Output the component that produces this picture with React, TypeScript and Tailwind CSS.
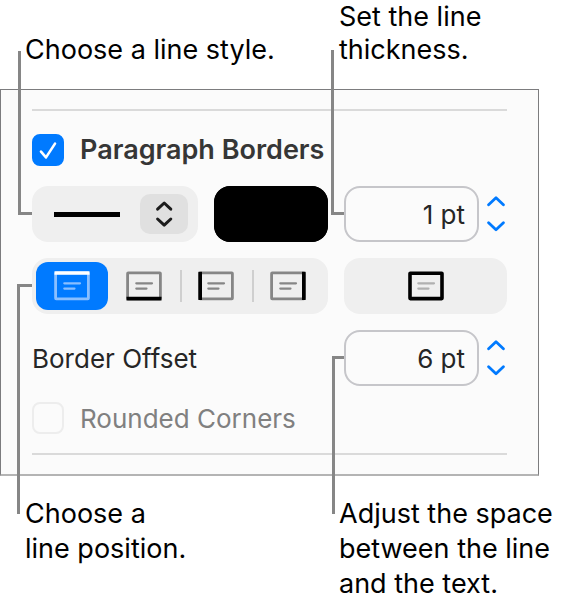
import React, { useState } from 'react';
import clsx from 'clsx';

type Side = 'top' | 'bottom' | 'left' | 'right';

const sideLines: Record<Side, string> = {
  top: 'M0.5 2H35.5',
  bottom: 'M0.5 27.6H35.5',
  left: 'M2.2 0.8V29',
  right: 'M33.8 0.8V29',
};

const sides: { id: Side; label: string }[] = [
  { id: 'top', label: 'Top border' },
  { id: 'bottom', label: 'Bottom border' },
  { id: 'left', label: 'Left border' },
  { id: 'right', label: 'Right border' },
];

const BorderIcon: React.FC<{ side?: Side; active?: boolean }> = ({ side, active }) => {
  const frame = side ? (active ? '#8abfff' : '#868686') : '#000';
  const text = active ? '#8abfff' : side ? '#868686' : '#b0b0b0';
  return (
    <svg viewBox="0 0 36 30" className="h-[30px] w-9" fill="none" aria-hidden="true">
      <rect
        x={side ? 1.6 : 2}
        y={side ? 1.8 : 2.2}
        width={side ? 32.8 : 32}
        height={side ? 26 : 25.4}
        rx={side ? 0.6 : 0.3}
        stroke={frame}
        strokeWidth={side ? 2.8 : 3.6}
        strokeLinejoin="round"
      />
      {side && <path d={sideLines[side]} stroke={active ? '#fff' : '#000'} strokeWidth="3.6" />}
      <path d="M10.3 12.3H26M10.3 17.6H20.5" stroke={text} strokeWidth="2.2" strokeLinecap="round" />
    </svg>
  );
};

const Stepper: React.FC<{ name: string; onStep: (by: number) => void }> = ({ name, onStep }) => (
  <div className="flex flex-col items-center justify-center gap-[14px] pr-[2px] text-[#007aff]">
    <button type="button" aria-label={`Increase ${name}`} onClick={() => onStep(1)}>
      <svg viewBox="0 0 18 11" className="block h-[11px] w-[18px]" fill="none" stroke="currentColor" strokeWidth="2.8" strokeLinecap="round" strokeLinejoin="round">
        <path d="M1.6 8.8 9 1.8l7.4 7" />
      </svg>
    </button>
    <button type="button" aria-label={`Decrease ${name}`} onClick={() => onStep(-1)}>
      <svg viewBox="0 0 18 11" className="block h-[11px] w-[18px]" fill="none" stroke="currentColor" strokeWidth="2.8" strokeLinecap="round" strokeLinejoin="round">
        <path d="M1.6 1.8 9 8.8l7.4-7" />
      </svg>
    </button>
  </div>
);

const PointField: React.FC<{ id: string; name: string; initial: number }> = ({ id, name, initial }) => {
  const [value, setValue] = useState(initial);
  return (
    <div className="flex gap-2">
      <input
        id={id}
        type="text"
        aria-label={name}
        value={`${value} pt`}
        onChange={(e) => setValue(parseInt(e.target.value, 10) || 0)}
        className="h-14 min-w-0 flex-1 rounded-2xl border-2 border-[#c6c6ca] bg-[#fbfbfb] pr-3 text-right text-[26px] text-[#262626] outline-none"
      />
      <Stepper name={name} onStep={(by) => setValue(Math.max(0, value + by))} />
    </div>
  );
};

const App: React.FC = () => {
  const [enabled, setEnabled] = useState(true);
  const [side, setSide] = useState<Side>('top');

  return (
    <div className="bg-white font-['Inter','Liberation_Sans',sans-serif] text-black">
      {/* Callouts above the panel */}
      <div className="grid grid-cols-[1fr_229px] items-end pb-[23px] pl-[25px] text-[27px] leading-[33px]">
        <p>Choose a line style.</p>
        <p>
          Set the line
          <br />
          thickness.
        </p>
      </div>

      {/* Format panel */}
      <section className="mr-[29px] border border-b-2 border-[#7c7c7e] border-b-[#b4b4b4] bg-[#fbfbfb] px-[31px] py-[19px] text-[26px] text-[#262626]">
        <hr className="mb-[23px] border-t-2 border-[#dadada]" />

        <label className="flex h-8 items-center gap-4 text-[27px] font-semibold text-[#363636]">
          <span className="relative flex">
            <input
              type="checkbox"
              checked={enabled}
              onChange={(e) => setEnabled(e.target.checked)}
              className="peer size-8 appearance-none rounded-lg border-2 border-[#c6c6ca] checked:border-[#007aff] checked:bg-[#007aff]"
            />
            <svg viewBox="0 0 32 32" className="pointer-events-none absolute inset-0 hidden size-8 peer-checked:block" fill="none" stroke="#fff" strokeWidth="2.6" strokeLinecap="round" strokeLinejoin="round">
              <path d="M9 17.6 14 23.4 23 9.6" />
            </svg>
          </span>
          Paragraph Borders
        </label>

        <div className="mt-5 grid grid-cols-[1fr_163px] gap-4">
          <div className="flex gap-4">
            {/* Line style */}
            <div className="relative flex-1">
              <select aria-label="Line style" className="h-14 w-full appearance-none rounded-2xl bg-[#efefef] outline-none">
                <option value="solid" />
              </select>
              <div className="pointer-events-none absolute inset-0 flex items-center justify-between gap-5 py-2 pr-[10px] pl-[22px]">
                <span className="h-[5px] flex-1 bg-black" />
                <span className="flex h-10 w-12 items-center justify-center rounded-[10px] bg-[#e0e0e0]">
                  <svg viewBox="0 0 18 28" className="h-7 w-[18px]" fill="none" stroke="#1c1c1c" strokeWidth="3" strokeLinecap="round" strokeLinejoin="round">
                    <path d="M2.6 9.2 9.2 3 15.8 9.2M2.6 19 9.2 25.2 15.8 19" />
                  </svg>
                </span>
              </div>
              <span className="pointer-events-none absolute right-full bottom-[27px] h-[164px] w-[14px] border-b-[3px] border-l-[3px] border-[#868686]" />
            </div>
            <input
              type="color"
              aria-label="Line color"
              defaultValue="#000000"
              className="h-14 w-[114px] appearance-none rounded-2xl bg-black [&::-webkit-color-swatch]:rounded-2xl [&::-webkit-color-swatch]:border-0 [&::-webkit-color-swatch-wrapper]:p-0"
            />
          </div>
          <div className="relative">
            <PointField id="thickness" name="Line thickness" initial={1} />
            <span className="pointer-events-none absolute right-full bottom-[27px] h-[165px] w-[13px] border-b-[3px] border-l-[3px] border-[#868686]" />
          </div>

          {/* Line position */}
          <div className="relative grid grid-cols-4 rounded-2xl bg-[#efefef] p-1">
            {sides.map((s, index) => (
              <button
                key={s.id}
                type="button"
                aria-label={s.label}
                aria-pressed={side === s.id}
                onClick={() => setSide(s.id)}
                className={clsx('relative flex h-12 items-center justify-center rounded-xl', side === s.id && 'bg-[#007aff]')}
              >
                {index > 1 && <span className="absolute top-2 left-0 h-8 w-[2px] bg-[#cfcfcf]" />}
                <BorderIcon side={s.id} active={side === s.id} />
              </button>
            ))}
            <span className="pointer-events-none absolute top-[26px] right-full h-[230px] w-[15px] border-t-[3px] border-l-[3px] border-[#868686]" />
          </div>
          <button type="button" aria-label="All borders" className="flex h-14 items-center justify-center rounded-2xl bg-[#efefef]">
            <BorderIcon />
          </button>

          <label htmlFor="offset" className="self-center">
            Border Offset
          </label>
          <div className="relative">
            <PointField id="offset" name="Border Offset" initial={6} />
            <span className="pointer-events-none absolute top-[26px] right-full h-[158px] w-[12px] border-t-[3px] border-l-[3px] border-[#868686]" />
          </div>
        </div>

        <label className="mt-4 flex h-8 items-center gap-4 text-[#808080]">
          <input type="checkbox" disabled className="size-8 appearance-none rounded-lg border-2 border-[#ededed]" />
          Rounded Corners
        </label>

        <hr className="mt-[19px] border-t-2 border-[#dadada]" />
      </section>

      {/* Callouts below the panel */}
      <div className="grid grid-cols-[1fr_229px] pt-5 pl-[25px] text-[27px] leading-[35px]">
        <p>
          Choose a
          <br />
          line position.
        </p>
        <p>
          Adjust the space
          <br />
          between the line
          <br />
          and the text.
        </p>
      </div>
    </div>
  );
};

export default App;
